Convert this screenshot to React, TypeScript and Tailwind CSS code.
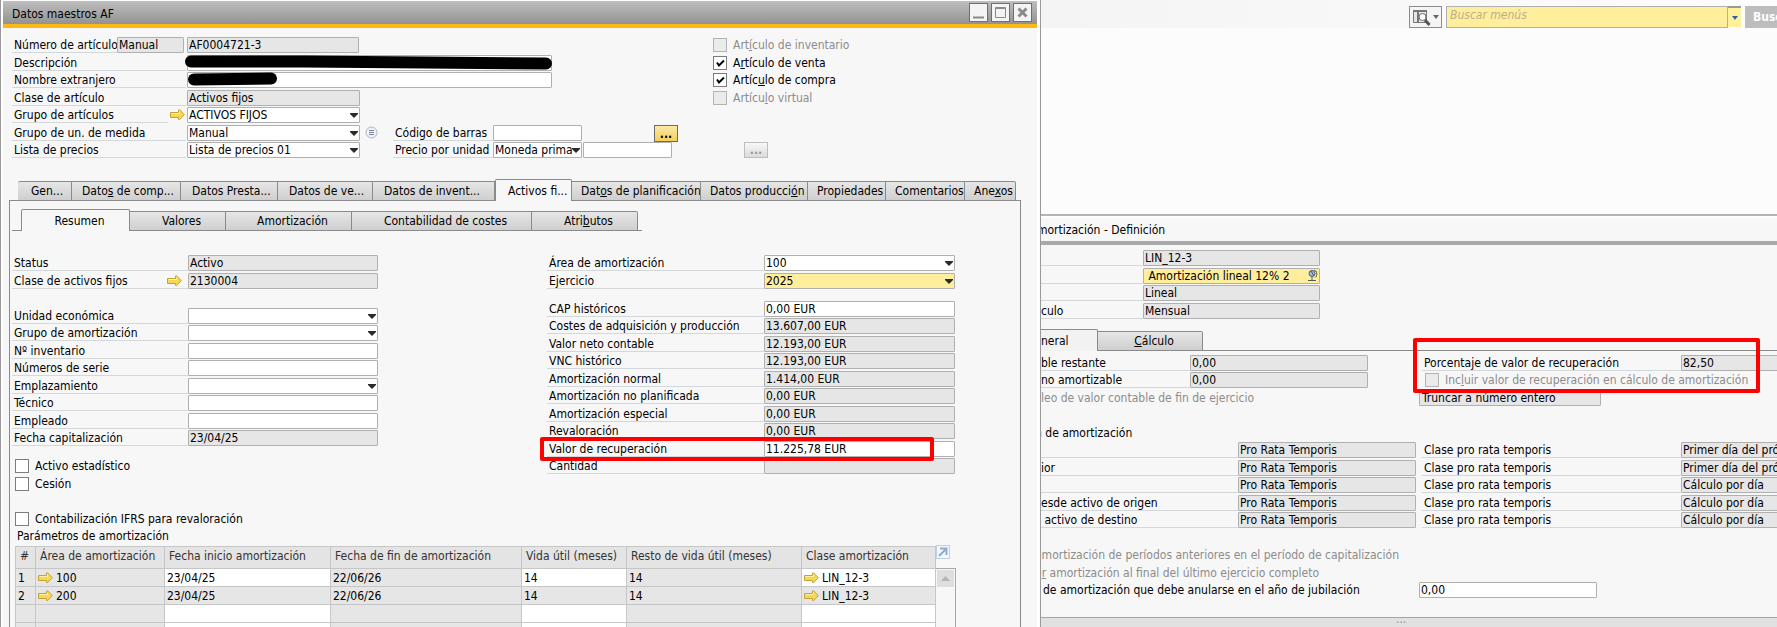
import React, { useId } from 'react';

// Labels mark their shortcut letter with "&", e.g. "Dato&s".
const Accel: React.FC<{ text: string }> = ({ text }) => {
  const at = text.indexOf('&');
  if (at < 0) return <>{text}</>;
  return (
    <>
      {text.slice(0, at)}
      <u>{text[at + 1]}</u>
      {text.slice(at + 2)}
    </>
  );
};

const LinkArrow = () => (
  <svg width="15" height="12" viewBox="0 0 15 12" className="shrink-0">
    <path d="M0.5 3.5h8V1l1-.3 4.8 5-4.8 5-1-.3V8.500h-8z" fill="#f8d84e" stroke="#c2a23a" />
    <path d="M1.500 4.500h8V2.500" fill="none" stroke="#fdf0a8" />
  </svg>
);

const Caret = () => (
  <svg width="8" height="5" viewBox="0 0 8 5" className="pointer-events-none absolute right-[2px] top-[6px]">
    <path d="M0 0h8v1L4 5 0 1z" fill="#2b2b2b" />
  </svg>
);

interface FieldProps {
  label: string;
  value?: string;
  kind?: 'text' | 'off' | 'select';
  labelClass: string;
  boxClass: string;
  link?: 'beside' | 'over';
  yellow?: boolean;
  children?: React.ReactNode;
}

const Field: React.FC<FieldProps> = ({
  label, value = '', kind = 'text', labelClass, boxClass, link, yellow, children,
}) => {
  const id = useId();
  const bg = kind === 'off' ? 'bg-[#e6e6e6]' : yellow ? 'bg-[#ffee9c]' : 'bg-white';
  const box = `block h-4 w-full appearance-none rounded-[1px] border border-[#b0b0b0] px-px leading-[14px] outline-none ${bg}`;
  return (
    <div className="relative flex shrink-0">
      <div className={`relative flex h-4 shrink-0 ${labelClass}`}>
        <label htmlFor={id} className="h-4 flex-1 overflow-hidden whitespace-nowrap border-b border-[#d2d8dc] pl-[2px]">
          {label}
        </label>
        {link === 'beside' && <span className="flex w-[18px] items-center pl-[2px]"><LinkArrow /></span>}
        {link === 'over' && <span className="absolute right-[6px] top-[2px]"><LinkArrow /></span>}
      </div>
      <div className={`relative h-4 shrink-0 ${boxClass}`}>
        {kind === 'select' ? (
          <>
            <select id={id} className={box} defaultValue={value}>
              <option>{value}</option>
            </select>
            <Caret />
          </>
        ) : (
          <input id={id} className={box} defaultValue={value} readOnly={kind === 'off'} />
        )}
        {children}
      </div>
    </div>
  );
};

const Check: React.FC<{ label: string; checked?: boolean; disabled?: boolean }> = ({ label, checked, disabled }) => (
  <label className={`flex items-start gap-[6px] whitespace-nowrap ${disabled ? 'text-[#8c8c8c]' : ''}`}>
    <span className="relative mt-px h-[14px] w-[14px] shrink-0">
      <input
        type="checkbox"
        defaultChecked={checked}
        disabled={disabled}
        className="block h-[14px] w-[14px] appearance-none border border-[#7d7d7d] bg-white disabled:border-[#b4b4b4] disabled:bg-[#ebebeb]"
      />
      {checked && (
        <svg width="14" height="14" viewBox="0 0 14 14" className="pointer-events-none absolute inset-0">
          <path d="M4 6.500l2 3 5-5" fill="none" stroke="#000" strokeWidth="2" />
        </svg>
      )}
    </span>
    <span><Accel text={label} /></span>
  </label>
);

const TAB = 'shrink-0 overflow-hidden whitespace-nowrap border-[#8a8a8a]';
const TAB_OFF = `${TAB} h-5 border border-l-0 bg-linear-to-b from-[#e6e6e6] to-[#cfcfcf]`;
const TAB_ON = `${TAB} h-[22px] rounded-t-[2px] border border-b-0 bg-[#f7f7f7]`;

// Rows sit on a 35px pair so the forms line up across columns.
const ROWS = '[&>*:nth-child(odd)]:h-[18px] [&>*:nth-child(even)]:h-[17px]';
const ROWS_ALT = '[&>*:nth-child(odd)]:h-[17px] [&>*:nth-child(even)]:h-[18px]';

const mainTabs = [
  { text: 'Gen...', width: 'w-[54px] border-l pl-[13px] rounded-tl-[2px]' },
  { text: 'Dato&s de comp...', width: 'w-[109px] pl-[10px]' },
  { text: 'Datos Presta...', width: 'w-[97px] pl-[11px]' },
  { text: 'Datos de ve...', width: 'w-[95px] pl-[11px]' },
  { text: 'Datos de invent...', width: 'w-[122px] pl-[11px]' },
  { text: 'Activos fi...', width: 'w-[77px] pl-[12px]', on: true },
  { text: 'Dat&os de planificación', width: 'w-[129px] pl-[9px]' },
  { text: 'Datos producci&ón', width: 'w-[107px] pl-[9px]' },
  { text: 'Propiedades', width: 'w-[78px] pl-[9px]' },
  { text: 'Comentarios', width: 'w-[79px] pl-[9px]' },
  { text: 'Ane&xos', width: 'w-[51px] pl-[9px] rounded-tr-[2px]' },
];

const subTabs = [
  { text: 'Resumen', width: 'w-[109px]', on: true },
  { text: 'Valores', width: 'w-[96px]' },
  { text: 'Amortización', width: 'w-[126px]' },
  { text: 'Contabilidad de costes', width: 'w-[180px]' },
  { text: 'Atri&butos', width: 'w-[106px] rounded-tr-[2px]' },
];

const assetFields: { label: string; value?: string; kind?: FieldProps['kind'] }[] = [
  { label: 'Unidad económica', kind: 'select' },
  { label: 'Grupo de amortización', kind: 'select' },
  { label: 'Nº inventario' },
  { label: 'Números de serie' },
  { label: 'Emplazamiento', kind: 'select' },
  { label: 'Técnico' },
  { label: 'Empleado' },
  { label: 'Fecha capitalización', value: '23/04/25', kind: 'off' },
];

const amounts: { label: string; value: string; kind?: FieldProps['kind'] }[] = [
  { label: 'CAP históricos', value: '0,00 EUR' },
  { label: 'Costes de adquisición y producción', value: '13.607,00 EUR', kind: 'off' },
  { label: 'Valor neto contable', value: '12.193,00 EUR', kind: 'off' },
  { label: 'VNC histórico', value: '12.193,00 EUR', kind: 'off' },
  { label: 'Amortización normal', value: '1.414,00 EUR', kind: 'off' },
  { label: 'Amortización no planificada', value: '0,00 EUR', kind: 'off' },
  { label: 'Amortización especial', value: '0,00 EUR', kind: 'off' },
  { label: 'Revaloración', value: '0,00 EUR', kind: 'off' },
  { label: 'Valor de recuperación', value: '11.225,78 EUR' },
  { label: 'Cantidad', value: '', kind: 'off' },
];

const paramRows = [
  ['1', '100', '23/04/25', '22/06/26', '14', '14', 'LIN_12-3'],
  ['2', '200', '23/04/25', '22/06/26', '14', '14', 'LIN_12-3'],
  ['', '', '', '', '', '', ''],
  ['', '', '', '', '', '', ''],
];

const proRata = [
  ['', 'Primer día del próximo mes'],
  ['ior', 'Primer día del próximo mes'],
  ['', 'Cálculo por día'],
  ['esde activo de origen', 'Cálculo por día'],
  ['\u00a0activo de destino', 'Cálculo por día'],
];

const WinButton: React.FC<{ name: string; children: React.ReactNode }> = ({ name, children }) => (
  <button aria-label={name} className="h-[19px] w-[19px] border border-[#6f6f6f] bg-[#f4f4f4]">
    <svg width="17" height="17" viewBox="0 0 17 17" fill="none" stroke="#8a8a8a">{children}</svg>
  </button>
);

const HeaderForm = () => {
  const label = 'w-[174px] mr-px';
  return (
    <div className="flex pl-[9px] pt-[9px]">
      <div className={`w-[701px] shrink-0 ${ROWS}`}>
        <div className="flex">
          <Field label="Número de artículo" value="Manual" kind="off" labelClass="w-[105px]" boxClass="w-[67px]" />
          <input aria-label="Código" readOnly defaultValue="AF0004721-3" className="ml-[3px] h-4 w-[172px] rounded-[1px] border border-[#b0b0b0] bg-[#e6e6e6] px-px leading-[14px]" />
        </div>
        <Field label="Descripción" labelClass={label} boxClass="w-[365px]">
          <svg width="372" height="16" viewBox="0 0 372 16" className="absolute -left-[3px] top-0">
            <path d="M7 6.500L120 6.500 240 7.500 362 8.500" fill="none" stroke="#000" strokeWidth="12" strokeLinecap="round" />
          </svg>
        </Field>
        <Field label="Nombre extranjero" labelClass={label} boxClass="w-[365px]">
          <svg width="92" height="14" viewBox="0 0 92 14" className="absolute left-0 top-0">
            <path d="M7 7.500L84 6.500" fill="none" stroke="#000" strokeWidth="12" strokeLinecap="round" />
          </svg>
        </Field>
        <Field label="Clase de artículo" value="Activos fijos" kind="off" labelClass={label} boxClass="w-[173px]" />
        <Field label="Grupo de artículos" value="ACTIVOS FIJOS" kind="select" link="beside" labelClass={label} boxClass="w-[173px]" />
        <div className="flex">
          <Field label="Grupo de un. de medida" value="Manual" kind="select" labelClass={label} boxClass="w-[173px]" />
          <svg width="13" height="13" viewBox="0 0 13 13" className="ml-[5px] mr-[15px] mt-px shrink-0">
            <circle cx="6.500" cy="6.500" r="5.500" fill="#eef2f8" stroke="#a9b4c8" />
            <path d="M4 4.500h5M4 6.500h5M4 8.500h5" stroke="#7d8494" />
          </svg>
          <Field label="Código de barras" labelClass="w-[100px]" boxClass="w-[89px]" />
          <button className="ml-[72px] h-[17px] w-6 shrink-0 border border-[#6b6b6b] bg-linear-to-b from-[#fbe9a6] to-[#f3cf5a] font-bold leading-[12px]">...</button>
        </div>
        <div className="flex">
          <div className="w-[381px] shrink-0">
            <Field label="Lista de precios" value="Lista de precios 01" kind="select" labelClass={label} boxClass="w-[173px]" />
          </div>
          <Field label="Precio por unidad" value="Moneda prima" kind="select" labelClass="w-[100px]" boxClass="w-[89px]" />
          <input aria-label="Precio" className="ml-px h-4 w-[89px] shrink-0 rounded-[1px] border border-[#b0b0b0] bg-white px-px" />
          <button className="ml-[72px] h-4 w-6 shrink-0 border border-[#bdbdbd] bg-linear-to-b from-[#f7f7f7] to-[#dcdcdc] font-bold leading-[12px] text-[#9a9a9a]">...</button>
        </div>
      </div>
      <div className={ROWS}>
        <Check label="Art&ículo de inventario" disabled />
        <Check label="A&rtículo de venta" checked />
        <Check label="Artíc&ulo de compra" checked />
        <Check label="Artícu&lo virtual" disabled />
      </div>
    </div>
  );
};

const ParamsTable = () => (
  <div className="ml-[3px] mt-[2px] flex">
    <table className="w-[920px] table-fixed border-collapse">
      <colgroup>
        <col className="w-[20px]" />
        <col className="w-[129px]" />
        <col className="w-[166px]" />
        <col className="w-[191px]" />
        <col className="w-[105px]" />
        <col className="w-[175px]" />
        <col className="w-[134px]" />
      </colgroup>
      <thead>
        <tr className="h-[22px] bg-[#e4e4e4] text-left text-[#333]">
          {['#', 'Área de amortización', 'Fecha inicio amortización', 'Fecha de fin de amortización', 'Vida útil (meses)', 'Resto de vida útil (meses)', 'Clase amortización'].map((h) => (
            <th key={h} className="whitespace-nowrap border border-[#c6c6c6] p-0 pb-1 pl-1 font-normal">{h}</th>
          ))}
        </tr>
      </thead>
      <tbody>
        {paramRows.map((row, r) => (
          <tr key={r} className="h-[18px]">
            {row.map((cell, c) => (
              <td
                key={c}
                className={`h-[18px] border border-[#c6c6c6] p-0 pl-[2px] leading-4 ${r !== 1 && [2, 4, 6].includes(c) ? 'bg-white' : 'bg-[#e6e6e6]'}`}
              >
                {cell && (c === 1 || c === 6) ? (
                  <span className="flex items-center gap-[3px]"><LinkArrow />{cell}</span>
                ) : (
                  cell
                )}
              </td>
            ))}
          </tr>
        ))}
      </tbody>
    </table>
    <div className="flex w-5 flex-col">
      <button aria-label="Ampliar" className="h-[22px]">
        <svg width="14" height="14" viewBox="0 0 14 14" fill="none" className="-mt-[10px]">
          <rect x=".5" y=".5" width="13" height="13" fill="#f4f8fc" stroke="#bdd0e4" />
          <path d="M3 11l7-7M4 3.500h6.500V10" stroke="#8fabd0" strokeWidth="2" />
        </svg>
      </button>
      <div className="flex-1 border-r border-t border-[#a8a8a8] p-px">
        <div className="flex h-[17px] items-center justify-center bg-[#dedede]">
          <svg width="9" height="5" viewBox="0 0 9 5"><path d="M0 5l4.500-5L9 5z" fill="#b4b4b4" /></svg>
        </div>
      </div>
    </div>
  </div>
);

const AssetWindow = () => (
  <section className="relative z-10 h-full w-[1041px] shrink-0 overflow-hidden border-x border-[#9a9a9a] bg-white pl-[2px] pr-[3px] pt-px">
    <div className="flex h-full flex-col bg-[#f7f7f7]">
      <header className="flex h-[27px] shrink-0 items-center border-b-4 border-[#fdb813] bg-linear-to-b from-[#bebebe] to-[#939393] pl-[9px] pr-[5px]">
        <h1 className="flex-1 pt-[2px]">Datos maestros AF</h1>
        <div className="flex gap-[3px]">
          <WinButton name="Minimizar"><path d="M3 13.500h11" strokeWidth="2" /></WinButton>
          <WinButton name="Maximizar"><path d="M3.500 3.500h10v10h-10zM3.500 4.500h10" /></WinButton>
          <WinButton name="Cerrar"><path d="M4.500 4.500l8 8M12.500 4.500l-8 8" strokeWidth="3" /></WinButton>
        </div>
      </header>

      <HeaderForm />

      <nav className="relative -mb-px mt-[19px] flex items-end pl-[15px]">
        {mainTabs.map((t) => (
          <button key={t.text} className={`${t.on ? TAB_ON : TAB_OFF} ${t.width} text-left`}>
            <Accel text={t.text} />
          </button>
        ))}
      </nav>

      <div className="ml-[6px] mr-4 flex-1 border border-b-0 border-[#8a8a8a] pl-[2px] pt-2">
        <nav className="flex">
          <span className="w-[9px] border-b border-[#8a8a8a]" />
          <div className="flex items-end">
            {subTabs.map((t) => (
              <button key={t.text} className={`${t.on ? TAB_ON : TAB_OFF} ${t.width} pl-2`}>
                <Accel text={t.text} />
              </button>
            ))}
          </div>
          <span className="w-1 border-b border-[#8a8a8a]" />
        </nav>

        <div className="mt-6 flex gap-[169px]">
          <div className="w-[366px]">
            <div className={ROWS}>
              <Field label="Status" value="Activo" kind="off" labelClass="w-[176px]" boxClass="w-[190px]" />
              <Field label="Clase de activos fijos" value="2130004" kind="off" link="over" labelClass="w-[176px]" boxClass="w-[190px]" />
            </div>
            <div className={`mt-[18px] ${ROWS_ALT}`}>
              {assetFields.map((f) => (
                <Field key={f.label} {...f} labelClass="w-[176px]" boxClass="w-[190px]" />
              ))}
            </div>
            <div className={`mt-[10px] pl-[3px] ${ROWS}`}>
              <Check label="Activo estadístico" />
              <Check label="Cesión" />
              <div />
              <Check label="Contabilización IFRS para revaloración" />
            </div>
          </div>
          <div className="w-[409px]">
            <div className={ROWS}>
              <Field label="Área de amortización" value="100" kind="select" labelClass="w-[217px]" boxClass="w-[191px]" />
              <Field label="Ejercicio" value="2025" kind="select" yellow labelClass="w-[217px]" boxClass="w-[191px]" />
            </div>
            <div className={`mt-[11px] ${ROWS_ALT}`}>
              {amounts.map((f) => (
                <div key={f.label} className="relative">
                  <Field {...f} labelClass="w-[217px]" boxClass="w-[191px]" />
                  {f.label === 'Valor de recuperación' && (
                    <div className="pointer-events-none absolute -left-[7px] -top-1 z-10 h-6 w-[394px] rounded-[2px] border-4 border-[#ff0000]" />
                  )}
                </div>
              ))}
            </div>
          </div>
        </div>

        <h2 className="pl-[5px]">Parámetros de amortización</h2>
        <ParamsTable />
      </div>
    </div>
  </section>
);

const Toolbar = () => (
  <div className="flex h-7 justify-end overflow-hidden bg-linear-to-r from-[#f4f4f4] to-[#fdfdfd] pt-[6px]">
    <button aria-label="Buscar en" className="mr-1 flex h-[22px] w-[33px] shrink-0 items-center gap-[2px] border border-[#8c8c8c] bg-[#f5f5f5] pl-[3px]">
      <svg width="18" height="17" viewBox="0 0 18 17" fill="none">
        <path d="M.5 1.500h13v12H.5z" fill="#e6e6e6" stroke="#777" />
        <path d="M0 2h14M5 2v11" stroke="#777" strokeWidth="2" />
        <circle cx="9.500" cy="8" r="3.500" fill="#fff" stroke="#6b6b6b" />
        <path d="M12 11l4.500 5" stroke="#555" strokeWidth="3" />
      </svg>
      <svg width="6" height="4" viewBox="0 0 6 4"><path d="M0 0h6L3 4z" fill="#666" /></svg>
    </button>
    <input
      aria-label="Buscar menús"
      placeholder="Buscar menús"
      className="h-[22px] w-[282px] shrink-0 border border-[#b0b0b0] bg-[#ffee9c] pb-[5px] pl-[3px] italic placeholder:text-[#b9b08a]"
    />
    <button aria-label="Abrir lista" className="mr-1 flex h-[21px] w-[13px] shrink-0 items-center justify-center border-t-2 border-[#999] bg-[#fff09a]">
      <svg width="6" height="4" viewBox="0 0 6 4"><path d="M0 0h6L3 4z" fill="#2f62a8" /></svg>
    </button>
    <button className="h-[22px] w-8 shrink-0 overflow-hidden bg-[#bdbdbd] pl-2 text-left font-bold text-white">Buscar</button>
  </div>
);

const DefinitionPanel = () => {
  const box = 'w-[178px]';
  return (
    <section className="flex-1 overflow-hidden whitespace-nowrap bg-[#f7f7f7]">
      <h2 className="h-[29px] border-b-4 border-t-2 border-[#a9a9a9] border-t-white pt-1 -indent-1">mortización - Definición</h2>
      <div className={`-ml-[2px] pt-[5px] ${ROWS}`}>
        <Field label="" value="LIN_12-3" kind="off" labelClass="w-[104px]" boxClass="w-[177px]" />
        <Field label="" value=" Amortización lineal 12% 2" yellow labelClass="w-[104px]" boxClass="w-[177px]">
          <svg width="12" height="13" viewBox="0 0 12 13" fill="none" className="absolute right-px top-px">
            <circle cx="5" cy="4.500" r="3" fill="#9fc0d8" stroke="#43617a" />
            <path d="M5 8v3M1 11.500h8M7 1c3 1 4 5 1 7.500M4 2l3 5" stroke="#4d5b63" />
            <path d="M9.500 2v6" stroke="#8a8146" />
          </svg>
        </Field>
        <Field label="" value="Lineal" kind="off" labelClass="w-[104px]" boxClass="w-[177px]" />
        <Field label="culo" value="Mensual" kind="off" labelClass="w-[104px]" boxClass="w-[177px]" />
      </div>
      <nav className="mt-[9px] flex items-end">
        <button className={`${TAB} h-[22px] w-[57px] rounded-tr-[2px] border-r border-t bg-[#f2f2f2] text-left`}>neral</button>
        <button className={`${TAB_OFF} w-[105px] rounded-tr-[2px] pl-2`}><Accel text="&Cálculo" /></button>
        <span className="flex-1 border-b border-[#8a8a8a]" />
      </nav>

      <div className={`-ml-[2px] pt-1 ${ROWS_ALT}`}>
        <div className="flex">
          <Field label="ble restante" value="0,00" kind="off" labelClass="w-[151px]" boxClass={box} />
          <div className="relative ml-[54px]">
            <Field label="Porcentaje de valor de recuperación" value="82,50" kind="off" labelClass="w-[259px]" boxClass={box} />
            <div className="pointer-events-none absolute -left-[9px] -top-[17px] z-10 h-[55px] w-[347px] rounded-[2px] border-4 border-[#ff0000]" />
          </div>
        </div>
        <div className="flex">
          <Field label="no amortizable" value="0,00" kind="off" labelClass="w-[151px]" boxClass={box} />
          <div className="ml-[57px]">
            <Check label="Inc&luir valor de recuperación en cálculo de amortización" disabled />
          </div>
        </div>
        <div className="flex">
          <span className="w-[380px] shrink-0 pl-[2px] text-[#8c8c8c]">leo de valor contable de fin de ejercicio</span>
          <input aria-label="Redondeo" readOnly defaultValue="Truncar a número entero" className="h-4 w-[182px] rounded-[1px] border border-[#b0b0b0] bg-[#e6e6e6] px-[2px] leading-[14px]" />
        </div>
        <div />
        <h3 className="pl-[2px] -indent-1.5">n de amortización</h3>
        {proRata.map(([label, calc], i) => (
          <div key={i} className="flex">
            <Field label={label} value="Pro Rata Temporis" kind="off" labelClass="w-[199px]" boxClass={box} />
            <div className="ml-[6px]">
              <Field label="Clase pro rata temporis" value={calc} kind="off" labelClass="w-[259px]" boxClass={box} />
            </div>
          </div>
        ))}
        <div />
        <p className="pl-[2px] -indent-1.5 text-[#8c8c8c]">amortización de períodos anteriores en el período de capitalización</p>
        <p className="pl-[2px] -indent-1.5 text-[#8c8c8c]"><Accel text="e&r amortización al final del último ejercicio completo" /></p>
        <div className="flex">
          <label htmlFor="anular" className="w-[380px] shrink-0 pl-1">de amortización que debe anularse en el año de jubilación</label>
          <input id="anular" defaultValue="0,00" className="h-4 w-[178px] rounded-[1px] border border-[#b0b0b0] bg-white px-px leading-[14px]" />
        </div>
      </div>
    </section>
  );
};

const App: React.FC = () => (
  <main className="flex h-screen overflow-hidden bg-[#fcfcfc] font-['DejaVu_Sans_Condensed','Noto_Sans',sans-serif] text-[12px] leading-4 text-black">
    <AssetWindow />
    <div className="flex min-w-0 flex-1 flex-col overflow-hidden">
      <Toolbar />
      <div className="h-[188px] shrink-0 border-b-2 border-[#b4b4b4]" />
      <DefinitionPanel />
      <footer className="h-[10px] shrink-0 overflow-hidden border-t border-[#a5a59d] bg-[#e1e1e1] pl-[355px] text-[#8c8c8c]">
        <span className="-mt-[7px] block">...</span>
      </footer>
    </div>
  </main>
);

export default App;
